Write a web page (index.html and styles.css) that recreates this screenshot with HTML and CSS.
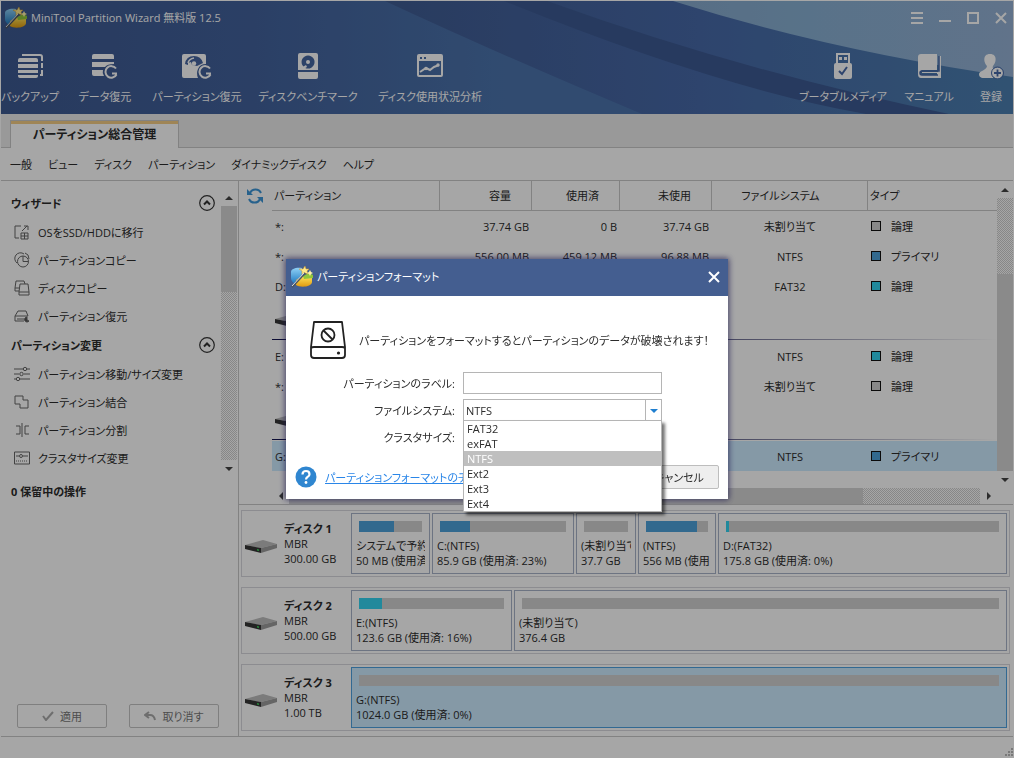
FILE: index.html
```html
<!DOCTYPE html>
<html lang="ja">
  <head>
    <meta charset="UTF-8" />
    <meta name="viewport" content="width=device-width, initial-scale=1.0" />
    <title>MiniTool Partition Wizard</title>
    <link rel="stylesheet" href="styles.css" />
  </head>
  <body>
    <!-- Shared icons -->
    <svg class="defs" aria-hidden="true">
      <defs>
        <linearGradient id="gold" x1="0" y1="0" x2="0" y2="1">
          <stop offset="0" stop-color="#ffe45a" />
          <stop offset="1" stop-color="#e09a10" />
        </linearGradient>
        <linearGradient id="sky" x1="0" y1="0" x2="0" y2="1">
          <stop offset="0" stop-color="#8fd0f5" />
          <stop offset="1" stop-color="#1c78c0" />
        </linearGradient>
      </defs>
      <symbol id="app-icon" viewBox="0 0 22 22">
        <path d="M0 6c0-3 5-5 11-4l1 8-7 4-1 4C1 16 0 14 0 12z" fill="url(#sky)" />
        <path d="M5 14l6-4h10v6c0 5-12 6-16 3z" fill="url(#gold)" />
        <path d="M12 10l6-3 4 2v3l-9 1z" fill="#8fc63d" />
        <path d="M14 0l1 3 3 0-2 2 1 3-3-1-3 2 0-4-3-2 4 0z" fill="#ffe98a" stroke="#c9962a" stroke-width=".5" />
        <path d="M19 4l1 2 2 1-2 1-1 2-1-2-2-1 2-1z" fill="#fff3a8" />
        <path d="M1 21L14 7" stroke="#4d5560" stroke-width="2" />
        <path d="M1 20L13 7" stroke="#d8dde2" stroke-width="1" />
      </symbol>
      <symbol id="drive" viewBox="0 0 32 13">
        <path d="M0 5L18 0l14 4-16 4z" fill="#bdbdbd" />
        <path d="M0 5l16 3v5L0 9z" fill="#363636" />
        <path d="M16 8l16-4v4l-16 5z" fill="#9c9c9c" />
        <path d="M12 9l2 .4v1.6l-2-.4z" fill="#3dd65c" />
      </symbol>
      <symbol id="collapse" viewBox="0 0 16 16">
        <circle cx="8" cy="8" r="7.3" fill="none" stroke="#333" stroke-width="1.2" />
        <path d="M5 9.5l3-3 3 3" fill="none" stroke="#333" stroke-width="2" />
      </symbol>
    </svg>

    <header class="app-header">
      <svg class="swoosh" viewBox="0 0 1012 113" preserveAspectRatio="none" aria-hidden="true">
        <defs>
          <linearGradient id="base" x1="0" x2="1" y1="0" y2="0">
            <stop offset="0" stop-color="#3d5991" />
            <stop offset=".25" stop-color="#42629c" />
            <stop offset=".5" stop-color="#4c74ad" />
            <stop offset="1" stop-color="#4c74ad" />
          </linearGradient>
          <linearGradient id="mid" x1="0" x2="1" y1="0" y2="0">
            <stop offset="0" stop-color="#3f5c92" />
            <stop offset=".5" stop-color="#4769a8" />
            <stop offset="1" stop-color="#4c7fb0" />
          </linearGradient>
          <linearGradient id="light" x1="0" x2="1" y1="0" y2="0">
            <stop offset="0" stop-color="#86a9cc" />
            <stop offset=".4" stop-color="#88b0d3" />
            <stop offset="1" stop-color="#95b1d4" />
          </linearGradient>
        </defs>
        <rect width="1012" height="113" fill="url(#base)" />
        <path d="M384 0Q500 54 641 113H1012V0z" fill="url(#mid)" />
        <path d="M503 0Q720 88 865 113H948Q740 70 546 0z" fill="#3d5a92" />
        <path d="M672 0Q830 50 1012 76V0z" fill="url(#light)" />
      </svg>
      <div class="title-bar">
        <svg class="app-logo"><use href="#app-icon" /></svg>
        <h1>MiniTool Partition Wizard 無料版 12.5</h1>
        <div class="window-controls">
          <button type="button" aria-label="メニュー">
            <svg viewBox="0 0 12 12"><path d="M0 1h12M0 6h12M0 11h12" stroke-width="2" /></svg>
          </button>
          <button type="button" aria-label="最小化">
            <svg viewBox="0 0 12 12"><path d="M0 9h12" stroke-width="2" /></svg>
          </button>
          <button type="button" aria-label="最大化">
            <svg viewBox="0 0 12 12"><path d="M1 1h10v10H1z" stroke-width="2" /></svg>
          </button>
          <button type="button" aria-label="閉じる">
            <svg viewBox="0 0 12 12"><path d="M1 1l10 10M11 1L1 11" stroke-width="2" /></svg>
          </button>
        </div>
      </div>
      <div class="toolbar">
        <div class="tools tools-left">
          <button type="button">
            <svg viewBox="0 0 26 26">
              <path d="M5 2h18q2 0 2 2v4M25 10v5M25 17v5h-2" fill="none" stroke="#fff" stroke-width="2" />
              <path d="M3 5h16q2 0 2 2v2H1V7q0-2 2-2zM1 11h20v4H1zM1 17h20v3H1zM1 22h20v1q0 2-2 2H3q-2 0-2-2z" fill="#fff" />
            </svg>
            <span>バックアップ</span>
          </button>
          <button type="button">
            <svg viewBox="0 0 26 26">
              <path d="M2 1h18q2 0 2 2v3H0V3q0-2 2-2zM0 9h22v2q-7 0-9 3H0zM0 17h11q-1 3 1 6H2q-2 0-2-2z" fill="#fff" />
              <path d="M24 15.500a5.800 5.800 0 1 0 .5 6M25 20.500h-5" fill="none" stroke="#fff" stroke-width="2" />
            </svg>
            <span>データ復元</span>
          </button>
          <button type="button">
            <svg viewBox="0 0 30 26" class="wide">
              <path d="M2 1h20q2 0 2 2v8q-6 0-8 5-2 4 0 9H2q-2 0-2-2V3q0-2 2-2z" fill="#fff" />
              <path d="M3 11q1-8 9-8 7 0 9 7l-6 3-5-1-1-3-3 1v2z" fill="#4565a0" />
              <path d="M6 10q1-4 6-5" fill="none" stroke="#fff" stroke-width="1.500" />
              <circle cx="12" cy="10.500" r="2.200" fill="#fff" />
              <path d="M28 15.500a5.800 5.800 0 1 0 .5 6M29 20.500h-5" fill="none" stroke="#fff" stroke-width="2" />
            </svg>
            <span>パーティション復元</span>
          </button>
          <button type="button">
            <svg viewBox="0 0 26 26">
              <path fill-rule="evenodd" d="M5 0h16q2 0 2 2v15H3V2q0-2 2-2zM13 2.500a6.500 6.500 0 1 0 .1 0zM3 19h20v5q0 2-2 2H5q-2 0-2-2z" fill="#fff" />
              <circle cx="13" cy="9" r="2" fill="#fff" />
              <path d="M6 15l5-3 1 2-5 3z" fill="#fff" />
            </svg>
            <span>ディスクベンチマーク</span>
          </button>
          <button type="button">
            <svg viewBox="0 0 26 26">
              <path fill-rule="evenodd" d="M2 1h22q2 0 2 2v19q0 2-2 2H2q-2 0-2-2V3q0-2 2-2zM2 8v14h22V8zM3 4v2h2V4zM7 4v2h2V4z" fill="#fff" />
              <path d="M3 19l6-4 4 2 4-3 5-2" fill="none" stroke="#fff" stroke-width="2" />
              <circle cx="21" cy="12" r="1.700" fill="#fff" />
              <circle cx="9" cy="15.500" r="1.700" fill="#fff" />
            </svg>
            <span>ディスク使用状況分析</span>
          </button>
        </div>
        <div class="tools tools-right">
          <button type="button">
            <svg viewBox="0 0 26 26">
              <path fill-rule="evenodd" d="M6 0h14v10q2 0 2 2v12q0 2-2 2H6q-2 0-2-2V12q0-2 2-2zM8 2v8h10V2zM9 4h3v3H9zM14 4h3v3h-3z" fill="#fff" />
              <path d="M9 18l3 3 5-7" fill="none" stroke="#4769a8" stroke-width="2" />
            </svg>
            <span>ブータブルメディア</span>
          </button>
          <button type="button">
            <svg viewBox="0 0 26 26">
              <path d="M5 1h16v16H6q-2 1-2 2.500T6 22h15v-2H6v-1h16v-2h1V3h2v22H5q-3 0-3-4V4q0-3 3-3z" fill="#fff" />
              <path d="M23 3v15H6q-2 0-2 2t2 2h16" fill="none" stroke="#4769a8" stroke-width="1.500" />
            </svg>
            <span>マニュアル</span>
          </button>
          <button type="button">
            <svg viewBox="0 0 26 26">
              <path d="M12 1c8 0 6 9 3 12-1 2 0 3 3 4-4 2-4 5-2 8H6c-4 0-5-2-5-4 0-3 8-4 8-8C6 10 4 1 12 1z" fill="#fff" />
              <circle cx="19.500" cy="20" r="5.500" fill="#fff" />
              <path d="M19.500 16.500v7M16 20h7" stroke="#4769a8" stroke-width="1.800" />
              <circle cx="19.500" cy="20" r="6" fill="none" stroke="#4769a8" stroke-width="1" />
            </svg>
            <span>登録</span>
          </button>
        </div>
      </div>
    </header>

    <div class="tab-bar">
      <a href="#" class="tab">パーティション総合管理</a>
    </div>

    <nav class="menu-bar">
      <a href="#">一般</a>
      <a href="#">ビュー</a>
      <a href="#">ディスク</a>
      <a href="#">パーティション</a>
      <a href="#">ダイナミックディスク</a>
      <a href="#">ヘルプ</a>
    </nav>

    <main class="workspace">
      <aside class="sidebar">
        <div class="sidebar-scroll">
          <div class="sidebar-list">
            <h2>ウィザード <svg><use href="#collapse" /></svg></h2>
            <ul>
              <li>
                <a href="#">
                  <svg viewBox="0 0 16 16"><path d="M7 2H1v12h4M8 7l5-5M10 2h4v4M7 9h7v6H7zM10.500 9v6M7 12h7" /></svg>
                  OSをSSD/HDDに移行
                </a>
              </li>
              <li>
                <a href="#">
                  <svg viewBox="0 0 16 16"><path d="M3 11A5.500 5.500 0 1 1 10 2" /><circle cx="9" cy="9.500" r="5.500" /><path d="M9 4v5.500h5.500M11 1q4 1 4 6" /></svg>
                  パーティションコピー
                </a>
              </li>
              <li>
                <a href="#">
                  <svg viewBox="0 0 16 16"><path d="M5 11H1V8l1-7h8l1 3M7 4h7l1 8v3H5v-3L6 4zM5 12h10M1 8h4" /></svg>
                  ディスクコピー
                </a>
              </li>
              <li>
                <a href="#">
                  <svg viewBox="0 0 16 16"><path d="M10 13H1V8l3-5h8l2 5M1 8h13M3 11h7" /><path d="M13 9a2.500 2.500 0 1 0 2 4l-2-1z" fill="#555" /></svg>
                  パーティション復元
                </a>
              </li>
            </ul>
            <h2>パーティション変更 <svg><use href="#collapse" /></svg></h2>
            <ul>
              <li>
                <a href="#">
                  <svg viewBox="0 0 16 16"><path d="M0 3h9M13 3h3M0 8h5M10 8h6M0 13h2M6 13h10" /><circle cx="11" cy="3" r="1.700" /><circle cx="7.500" cy="8" r="1.700" /><circle cx="4" cy="13" r="1.700" /></svg>
                  パーティション移動/サイズ変更
                </a>
              </li>
              <li>
                <a href="#">
                  <svg viewBox="0 0 16 16"><path d="M1 2h8v4h5v8H6v-4H1z" /></svg>
                  パーティション結合
                </a>
              </li>
              <li>
                <a href="#">
                  <svg viewBox="0 0 16 16"><path d="M8 1v14M2 4h4v8H2M15 4h-4v8h4" /></svg>
                  パーティション分割
                </a>
              </li>
              <li>
                <a href="#">
                  <svg viewBox="0 0 16 16"><path d="M.5 2h15v12H.5zM2 6h3M9 6h5" /><path d="M2 11h12" stroke-dasharray="1 1" /><circle cx="7" cy="6" r="1.500" /></svg>
                  クラスタサイズ変更
                </a>
              </li>
            </ul>
          </div>
          <div class="vscroll sidebar-vscroll">
            <i class="arrow up"></i>
            <div class="track"><div class="thumb"></div></div>
            <i class="arrow down"></i>
          </div>
        </div>
        <h2 class="pending">0 保留中の操作</h2>
        <div class="sidebar-actions">
          <button type="button" disabled>
            <svg viewBox="0 0 12 10"><path d="M1 5l3 4 7-8" /></svg>
            適用
          </button>
          <button type="button" disabled>
            <svg viewBox="0 0 12 10"><path d="M5 1L1 4l4 3M1 4h5q4 0 5 5" /></svg>
            取り消す
          </button>
        </div>
      </aside>

      <div class="content">
        <section class="partitions">
          <button type="button" class="refresh" aria-label="更新">
            <svg viewBox="0 0 16 16">
              <path d="M3 5a6 6 0 0 1 11 0M13 11a6 6 0 0 1-11 0" fill="none" stroke="#3c96d8" stroke-width="2" />
              <path d="M0 1v6h6zM16 15V9h-6z" fill="#3c96d8" />
            </svg>
          </button>
          <table>
            <colgroup>
              <col class="col-name" />
              <col class="col-size" />
              <col class="col-used" />
              <col class="col-free" />
              <col class="col-fs" />
              <col class="col-type" />
            </colgroup>
            <thead>
              <tr>
                <th class="left">パーティション</th>
                <th class="num">容量</th>
                <th class="num">使用済</th>
                <th class="num">未使用</th>
                <th class="fs">ファイルシステム</th>
                <th class="left">タイプ</th>
              </tr>
            </thead>
            <tbody>
              <tr>
                <td>*:</td>
                <td class="num">37.74 GB</td>
                <td class="num">0 B</td>
                <td class="num">37.74 GB</td>
                <td class="center">未割り当て</td>
                <td><i class="swatch none"></i>論理</td>
              </tr>
              <tr>
                <td>*:</td>
                <td class="num">556.00 MB</td>
                <td class="num">459.12 MB</td>
                <td class="num">96.88 MB</td>
                <td class="center">NTFS</td>
                <td><i class="swatch primary"></i>プライマリ</td>
              </tr>
              <tr>
                <td>D:</td>
                <td></td>
                <td></td>
                <td></td>
                <td class="center">FAT32</td>
                <td><i class="swatch logical"></i>論理</td>
              </tr>
              <tr class="disk-row">
                <td colspan="6"><svg class="drive"><use href="#drive" /></svg></td>
              </tr>
              <tr>
                <td>E:</td>
                <td></td>
                <td></td>
                <td></td>
                <td class="center">NTFS</td>
                <td><i class="swatch logical"></i>論理</td>
              </tr>
              <tr>
                <td>*:</td>
                <td></td>
                <td></td>
                <td></td>
                <td class="center">未割り当て</td>
                <td><i class="swatch none"></i>論理</td>
              </tr>
              <tr class="disk-row">
                <td colspan="6"><svg class="drive"><use href="#drive" /></svg></td>
              </tr>
              <tr class="selected">
                <td>G:</td>
                <td></td>
                <td></td>
                <td></td>
                <td class="center">NTFS</td>
                <td><i class="swatch primary"></i>プライマリ</td>
              </tr>
            </tbody>
          </table>
          <div class="vscroll table-vscroll">
            <i class="arrow up"></i>
            <div class="track"><div class="thumb"></div></div>
            <i class="arrow down"></i>
          </div>
          <div class="hscroll">
            <i class="arrow prev"></i>
            <div class="track"><div class="thumb"></div></div>
            <i class="arrow next"></i>
          </div>
        </section>

        <section class="disk-map">
          <article class="disk">
            <svg class="drive"><use href="#drive" /></svg>
            <div class="disk-info">
              <h3>ディスク 1</h3>
              <p>MBR</p>
              <p>300.00 GB</p>
            </div>
            <div class="volumes volumes-5">
              <div class="volume">
                <div class="bar"><div class="fill primary" style="width: 56%"></div></div>
                <p>システムで予約</p>
                <p>50 MB (使用済</p>
              </div>
              <div class="volume">
                <div class="bar"><div class="fill primary" style="width: 24%"></div></div>
                <p>C:(NTFS)</p>
                <p>85.9 GB (使用済: 23%)</p>
              </div>
              <div class="volume">
                <div class="bar"></div>
                <p>(未割り当て</p>
                <p>37.7 GB</p>
              </div>
              <div class="volume">
                <div class="bar"><div class="fill primary" style="width: 82%"></div></div>
                <p>(NTFS)</p>
                <p>556 MB (使用</p>
              </div>
              <div class="volume">
                <div class="bar"><div class="fill logical" style="width: 1%"></div></div>
                <p>D:(FAT32)</p>
                <p>175.8 GB (使用済: 0%)</p>
              </div>
            </div>
          </article>
          <article class="disk">
            <svg class="drive"><use href="#drive" /></svg>
            <div class="disk-info">
              <h3>ディスク 2</h3>
              <p>MBR</p>
              <p>500.00 GB</p>
            </div>
            <div class="volumes volumes-2">
              <div class="volume">
                <div class="bar"><div class="fill logical" style="width: 16%"></div></div>
                <p>E:(NTFS)</p>
                <p>123.6 GB (使用済: 16%)</p>
              </div>
              <div class="volume">
                <div class="bar"></div>
                <p>(未割り当て)</p>
                <p>376.4 GB</p>
              </div>
            </div>
          </article>
          <article class="disk">
            <svg class="drive"><use href="#drive" /></svg>
            <div class="disk-info">
              <h3>ディスク 3</h3>
              <p>MBR</p>
              <p>1.00 TB</p>
            </div>
            <div class="volumes">
              <div class="volume selected">
                <div class="bar"></div>
                <p>G:(NTFS)</p>
                <p>1024.0 GB (使用済: 0%)</p>
              </div>
            </div>
          </article>
        </section>
      </div>
    </main>

    <footer class="status-bar">
      <svg viewBox="0 0 9 9"><path d="M7 1h2M4 4h2M7 4h2M1 7h2M4 7h2M7 7h2" stroke="#bbb" stroke-width="2" /></svg>
    </footer>

    <!-- Format dialog -->
    <div class="backdrop">
      <div class="dialog" role="dialog" aria-labelledby="dialog-title">
        <div class="dialog-title">
          <svg class="app-logo"><use href="#app-icon" /></svg>
          <h2 id="dialog-title">パーティションフォーマット</h2>
          <button type="button" aria-label="閉じる">
            <svg viewBox="0 0 12 12"><path d="M1 1l10 10M11 1L1 11" /></svg>
          </button>
        </div>
        <form class="dialog-body">
          <div class="warning">
            <svg viewBox="0 0 36 38">
              <path d="M4 1h28l3 25v8q0 3-3 3H4q-3 0-3-3v-8zM1 27q1-1 3-1h28q2 0 3 1" fill="none" stroke="#222" stroke-width="1.800" stroke-linejoin="round" />
              <circle cx="18" cy="14" r="6.500" fill="none" stroke="#222" stroke-width="1.800" />
              <path d="M13.500 9.500l9 9" stroke="#222" stroke-width="1.800" />
              <circle cx="28.500" cy="32" r="1.600" fill="#222" />
            </svg>
            <p>パーティションをフォーマットするとパーティションのデータが破壊されます！</p>
          </div>
          <div class="fields">
            <label for="volume-label">パーティションのラベル:</label>
            <input type="text" id="volume-label" />
            <label for="file-system">ファイルシステム:</label>
            <div class="combo">
              <select id="file-system">
                <option>FAT32</option>
                <option>exFAT</option>
                <option selected>NTFS</option>
                <option>Ext2</option>
                <option>Ext3</option>
                <option>Ext4</option>
              </select>
              <ul class="options" role="listbox" aria-label="ファイルシステム">
                <li role="option">FAT32</li>
                <li role="option">exFAT</li>
                <li role="option" class="current" aria-selected="true">NTFS</li>
                <li role="option">Ext2</li>
                <li role="option">Ext3</li>
                <li role="option">Ext4</li>
              </ul>
            </div>
            <label for="cluster-size">クラスタサイズ:</label>
            <div class="combo">
              <select id="cluster-size"></select>
            </div>
          </div>
          <div class="dialog-footer">
            <svg viewBox="0 0 22 22">
              <circle cx="11" cy="11" r="10.500" fill="#2f86d0" />
              <path d="M7.500 8.500q0-3.500 3.500-3.500t3.500 3.200q0 1.800-2 2.800-1.500.8-1.500 2.500" fill="none" stroke="#fff" stroke-width="2.200" />
              <circle cx="11" cy="16.500" r="1.400" fill="#fff" />
            </svg>
            <a href="#">パーティションフォーマットのチュ</a>
            <button type="button">キャンセル</button>
          </div>
        </form>
      </div>
    </div>
  </body>
</html>
```
FILE: styles.css
```css
* {
  box-sizing: border-box;
}

body {
  display: flex;
  flex-direction: column;
  min-height: 100vh;
  margin: 0;
  border: 1px solid #fff;
  background-color: #fff;
  color: #2c2c2c;
  font-family: "Open Sans", "Noto Sans CJK JP", sans-serif;
  font-size: 11px;
  line-height: 15px;
  font-feature-settings: "palt";
}

h1,
h2,
h3,
p,
ul {
  margin: 0;
  padding: 0;
}

h1,
h2,
h3 {
  font-size: 11px;
}

ul {
  list-style: none;
}

a {
  color: inherit;
  text-decoration: none;
}

button,
input,
select {
  font: inherit;
  font-feature-settings: inherit;
  color: inherit;
}

svg {
  display: block;
  flex: none;
}

.defs {
  position: absolute;
  width: 0;
  height: 0;
}

/* Header */
.app-header {
  position: relative;
  height: 113px;
  color: #fff;
}

.swoosh {
  position: absolute;
  inset: 0;
  width: 100%;
  height: 100%;
}

.title-bar {
  position: relative;
  display: flex;
  align-items: center;
  gap: 4px;
  height: 33px;
  padding: 0 6px 0 4px;
}

.app-logo {
  width: 22px;
  height: 22px;
}

.title-bar h1 {
  flex: 1;
  font-weight: normal;
}

.window-controls {
  display: flex;
  gap: 16px;
}

.window-controls button {
  padding: 0;
  border: none;
  background: none;
}

.window-controls svg {
  width: 12px;
  height: 12px;
  fill: none;
  stroke: #fff;
}

.toolbar {
  position: relative;
  display: flex;
  justify-content: space-between;
  padding: 19px 6px 0 4px;
}

.tools {
  display: grid;
  gap: 24px;
}

.tools-left {
  grid-template-columns: 50px 52px 84px 90px 106px;
}

.tools-right {
  grid-template-columns: 80px 44px 32px;
}

.tools button {
  display: flex;
  flex-direction: column;
  align-items: center;
  gap: 10px;
  padding: 0;
  border: none;
  background: none;
  white-space: nowrap;
}

.tools svg {
  width: 26px;
  height: 26px;
}

.tools svg.wide {
  width: 30px;
}

/* Tabs and menu */
.tab-bar {
  display: flex;
  align-items: flex-end;
  height: 34px;
  padding-left: 9px;
  border-bottom: 1px solid #c8c8c8;
  background-color: #ececec;
}

.tab {
  width: 169px;
  height: 28px;
  margin-bottom: -1px;
  border: 1px solid #c8c8c8;
  border-bottom: none;
  background-color: #fff;
  box-shadow: inset 0 3px #f5cd84;
  font-size: 12px;
  font-weight: bold;
  line-height: 28px;
  text-align: center;
}

.menu-bar {
  display: flex;
  align-items: center;
  gap: 16px;
  height: 33px;
  padding-left: 9px;
  border-bottom: 1px solid #c8c8c8;
}

/* Workspace */
.workspace {
  flex: 1;
  display: grid;
  grid-template-columns: 238px 1fr;
}

.sidebar {
  display: flex;
  flex-direction: column;
  border-right: 1px solid #c8c8c8;
}

.sidebar-scroll {
  display: flex;
  padding-right: 1px;
}

.sidebar-list {
  flex: 1;
  padding: 7px 0 5px;
}

.sidebar h2 {
  display: flex;
  align-items: center;
  justify-content: space-between;
  height: 30px;
  padding: 0 6px 0 10px;
}

.sidebar h2 svg {
  width: 16px;
  height: 16px;
}

.sidebar-list a {
  display: flex;
  align-items: center;
  gap: 8px;
  height: 28px;
  padding-left: 13px;
  white-space: nowrap;
}

.sidebar-list li svg {
  width: 16px;
  height: 16px;
  fill: none;
  stroke: #666;
}

.sidebar .pending {
  height: 28px;
}

.sidebar-actions {
  display: flex;
  gap: 22px;
  margin-top: auto;
  padding: 0 0 8px 16px;
}

.sidebar-actions button {
  display: flex;
  align-items: center;
  justify-content: center;
  gap: 6px;
  width: 90px;
  height: 24px;
  border: 1px solid #c4c4c4;
  border-radius: 2px;
  background-color: #fff;
  color: #777;
}

.sidebar-actions svg {
  width: 12px;
  height: 10px;
  fill: none;
  stroke: #aaa;
  stroke-width: 2;
}

/* Scroll bars */
.vscroll {
  display: flex;
  flex-direction: column;
  width: 16px;
}

.sidebar-vscroll {
  padding-top: 8px;
}

.hscroll {
  display: flex;
  height: 16px;
}

.track {
  flex: 1;
  display: flex;
  background: repeating-conic-gradient(#d0d0d0 0 25%, #fff 0 50%) 0 0 / 2px 2px;
}

.thumb {
  background-color: #d5d5d5;
}

.arrow {
  display: flex;
  align-items: center;
  justify-content: center;
  flex: 0 0 17px;
}

.arrow::before {
  content: "";
  border: 4px solid transparent;
}

.arrow.up::before {
  border-top: none;
  border-bottom-color: #444;
}

.arrow.down::before {
  border-bottom: none;
  border-top-color: #444;
}

.arrow.prev::before {
  border-left: none;
  border-right-color: #444;
}

.arrow.next::before {
  border-right: none;
  border-left-color: #444;
}

.sidebar-vscroll .thumb {
  width: 100%;
  height: 34%;
}

.table-vscroll .track {
  align-items: flex-end;
}

.table-vscroll .thumb {
  width: 100%;
  height: 72%;
}

.hscroll .thumb {
  width: 83%;
}

/* Partition table */
.content {
  min-width: 0;
}

.partitions {
  display: grid;
  grid-template-columns: 33px 1fr 16px;
  grid-template-rows: 307px 16px;
  border-bottom: 1px solid #c8c8c8;
}

.refresh {
  align-self: start;
  padding: 7px 8px;
  border: none;
  background: none;
}

.refresh svg {
  width: 16px;
  height: 16px;
}

.partitions table {
  align-self: start;
  width: 100%;
  table-layout: fixed;
  border-spacing: 0;
}

.col-name {
  width: 168px;
}

.col-size,
.col-free {
  width: 92px;
}

.col-used {
  width: 88px;
}

.col-fs {
  width: 156px;
}

th {
  height: 30px;
  padding: 0 2px;
  border-right: 1px solid #c8c8c8;
  border-bottom: 1px solid #c8c8c8;
  font-weight: normal;
}

th:last-child {
  border-right: none;
}

th.left {
  text-align: left;
}

th.num {
  padding-right: 20px;
  text-align: right;
}

th.fs {
  padding-right: 20px;
}

td {
  height: 30px;
  padding: 0 3px;
}

td.num {
  text-align: right;
}

td.center {
  text-align: center;
}

tr.disk-row td {
  height: 40px;
  border-bottom: 1px solid #fff;
  background: linear-gradient(90deg, #141450 40%, #fff) bottom / 100% 1px no-repeat;
}

tr.selected td {
  background-color: #cdebff;
}

.drive {
  width: 32px;
  height: 13px;
}

.swatch {
  display: inline-block;
  width: 10px;
  height: 10px;
  margin-right: 10px;
  border: 1px solid #111;
}

.none {
  background-color: #d1d1d1;
}

.primary {
  background-color: #4da2da;
}

.logical {
  background-color: #34d3f0;
}

.hscroll {
  grid-column: 2;
}

/* Disk map */
.disk-map {
  display: flex;
  flex-direction: column;
  gap: 10px;
  padding: 5px 3px 5px 2px;
}

.disk {
  display: grid;
  grid-template-columns: 32px 60px 1fr;
  align-items: center;
  gap: 7px;
  height: 67px;
  padding: 0 2px 0 3px;
  border: 1px solid #d8d8de;
}

.disk .drive {
  margin-top: 6px;
}

.disk-info {
  white-space: nowrap;
}

.volumes {
  display: grid;
  gap: 2px;
  min-width: 0;
}

.volumes-5 {
  grid-template-columns: 79px 142px 60px 78px 1fr;
}

.volumes-2 {
  grid-template-columns: 161px 1fr;
}

.volume {
  height: 61px;
  min-width: 0;
  padding: 7px 4px 0;
  border: 1px solid #a8b2c8;
  overflow: hidden;
  white-space: nowrap;
}

.volume p {
  overflow: hidden;
}

.volume.selected {
  border-color: #4da2e0;
  background-color: #cdebff;
}

.bar {
  height: 11px;
  margin: 0 3px 6px;
  background-color: #d1d1d1;
}

.fill {
  height: 100%;
}

/* Status bar */
.status-bar {
  display: flex;
  align-items: flex-end;
  justify-content: flex-end;
  height: 21px;
  border-top: 1px solid #c8c8c8;
}

.status-bar svg {
  width: 9px;
  height: 9px;
}

/* Dialog */
.backdrop {
  position: fixed;
  inset: 0;
  display: flex;
  align-items: center;
  justify-content: center;
  background-color: rgba(0, 0, 0, 0.35);
}

.dialog {
  width: 442px;
  background-color: #fff;
  box-shadow: 0 0 6px 1px rgba(30, 25, 80, 0.7);
}

.dialog-title {
  display: flex;
  align-items: center;
  gap: 4px;
  height: 37px;
  padding: 0 8px 2px 5px;
  background-color: #445e90;
  color: #fff;
}

.dialog-title h2 {
  flex: 1;
  font-weight: normal;
}

.dialog-title button {
  padding: 0;
  border: none;
  background: none;
}

.dialog-title button svg {
  width: 12px;
  height: 12px;
  stroke: #fff;
  stroke-width: 2;
}

.dialog-body {
  padding: 24px 9px 10px;
}

.warning {
  display: flex;
  align-items: center;
  gap: 13px;
  height: 40px;
  margin-bottom: 12px;
  padding-left: 15px;
  white-space: nowrap;
}

.warning svg {
  width: 36px;
  height: 38px;
}

.fields {
  display: grid;
  grid-template-columns: 160px 199px;
  align-items: center;
  gap: 5px 8px;
  margin-bottom: 17px;
}

.fields label {
  text-align: right;
}

.fields input,
.fields select {
  display: block;
  width: 100%;
  height: 22px;
  padding: 0 2px;
  border: 1px solid #b5b5b5;
  background-color: #fff;
  appearance: none;
}

.combo {
  position: relative;
}

/* drop-down arrow */
.combo::after {
  content: "";
  position: absolute;
  top: 10px;
  right: 4px;
  border: 4px solid transparent;
  border-top-color: #1f7fd0;
  border-bottom: none;
}

.combo::before {
  content: "";
  position: absolute;
  top: 1px;
  right: 16px;
  width: 1px;
  height: 20px;
  background-color: #b5b5b5;
}

.options {
  position: absolute;
  z-index: 1;
  top: 21px;
  left: 0;
  width: 100%;
  border: 1px solid #b5b5b5;
  background-color: #fff;
  box-shadow: 3px 3px 3px rgba(0, 0, 0, 0.55);
}

.options li {
  padding: 0 3px;
}

.options .current {
  background-color: #bfbfbf;
  color: #fff;
}

.dialog-footer {
  display: flex;
  align-items: center;
  gap: 8px;
}

.dialog-footer svg {
  width: 22px;
  height: 22px;
}

.dialog-footer a {
  flex: 1;
  color: #2a86e8;
  text-decoration: underline;
}

.dialog-footer button {
  width: 90px;
  height: 24px;
  padding: 0 0 0 10px;
  border: 1px solid #bdbdbd;
  border-radius: 2px;
  background-color: #eee;
}
```
